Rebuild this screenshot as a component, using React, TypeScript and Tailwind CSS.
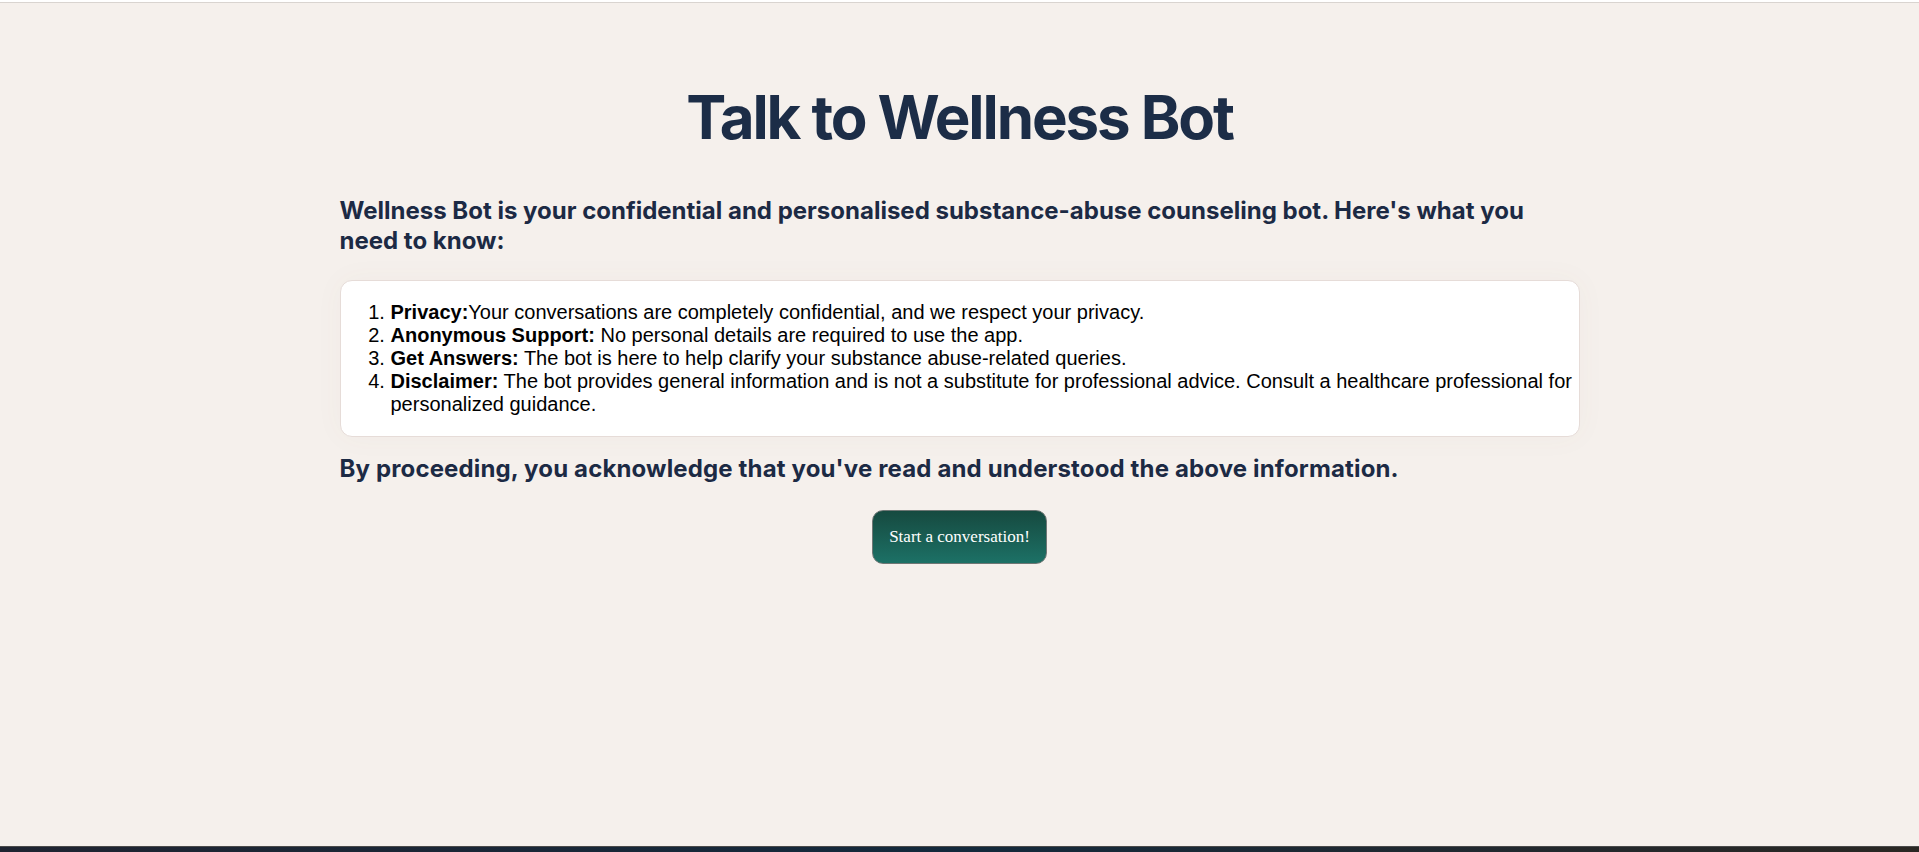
export default function App() {
  return (
    <div className="h-screen flex flex-col bg-[#f5f0ec] font-['Liberation_Serif',serif]">
      <div className="h-[2px] bg-white" />
      <div className="h-px bg-[#d9d4d0]" />

      <main className="flex-1 overflow-hidden">
        <div className="w-[1240px] mx-auto flex flex-col">
          <h1 className="mt-[84px] mb-[49px] text-center text-[60px] leading-[60px] font-bold tracking-[-0.035em] text-[#1c2d47] font-['Inter',sans-serif]">
            Talk to Wellness Bot
          </h1>

          <h2 className="text-[24px] leading-[30px] font-bold text-[#1c2a44] font-['Inter',sans-serif]">
            Wellness Bot is your confidential and personalised substance-abuse counseling bot. Here's what you need to know:
          </h2>

          <div className="mt-[24px] bg-white border border-[#e6dcd8] rounded-[12px] pl-[10px] pr-[4px] py-[20px] shadow-[0_0_30px_rgba(120,90,70,0.04)]">
            <ol className="list-decimal pl-[40px] text-[20px] leading-[23px] text-black font-['Liberation_Sans',Arial,sans-serif]">
              <li>
                <strong>Privacy:</strong>Your conversations are completely confidential, and we respect your privacy.
              </li>
              <li>
                <strong>Anonymous Support:</strong> No personal details are required to use the app.
              </li>
              <li>
                <strong>Get Answers:</strong> The bot is here to help clarify your substance abuse-related queries.
              </li>
              <li>
                <strong>Disclaimer:</strong> The bot provides general information and is not a substitute for professional advice. Consult a healthcare professional for personalized guidance.
              </li>
            </ol>
          </div>

          <h3 className="mt-[17px] text-[24px] leading-[30px] font-bold tracking-[0.006em] text-[#1c2a44] font-['Inter',sans-serif]">
            By proceeding, you acknowledge that you've read and understood the above information.
          </h3>

          <div className="mt-[26px] flex justify-center">
            <button className="px-4 py-[17px] rounded-[11px] border border-[#6f7775] bg-gradient-to-b from-[#164a40] to-[#1c7166] text-white text-[17px] leading-[18px]">
              Start a conversation!
            </button>
          </div>
        </div>
      </main>

      <div className="h-px bg-[#4a4a4a]" />
      <div className="h-[5px] bg-gradient-to-r from-[#1f2431] via-[#13293c] to-[#2a2723]" />
    </div>
  );
}
